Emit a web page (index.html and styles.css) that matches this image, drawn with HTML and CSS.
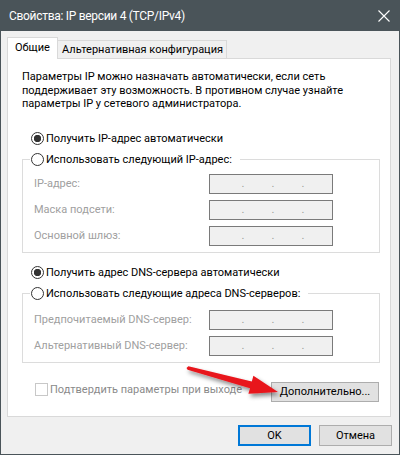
FILE: index.html
```html
<!DOCTYPE html>
<html lang="ru">
<head>
    <meta charset="UTF-8">
    <title>Свойства: IP версии 4 (TCP/IPv4)</title>
    <link rel="stylesheet" href="styles.css">
</head>
<body>

    <div class="window">

        <!-- Title bar -->
        <div class="titlebar">
            <span class="title">Свойства: IP версии 4 (TCP/IPv4)</span>
            <svg class="close" width="12" height="12" viewBox="0 0 12 12">
                <path d="M0.5 0.5 L11.5 11.5 M11.5 0.5 L0.5 11.5" stroke="#fff" stroke-width="1.1" fill="none"/>
            </svg>
        </div>

        <div class="dialog">

            <!-- Tabs -->
            <div class="tabs">
                <div class="tab active">Общие</div>
                <div class="tab other">Альтернативная конфигурация</div>
            </div>

            <div class="panel">
                <p class="intro">Параметры IP можно назначать автоматически, если сеть<br>поддерживает эту возможность. В противном случае узнайте<br>параметры IP у сетевого администратора.</p>

                <div class="opt first"><span class="radio on"></span>Получить IP-адрес автоматически</div>

                <fieldset class="group">
                    <legend class="opt"><span class="radio"></span>Использовать следующий IP-адрес:</legend>
                    <div class="field top-ip"><span class="field-label">IP-адрес:</span><span class="ip"><span>.</span><span>.</span><span>.</span></span></div>
                    <div class="field"><span class="field-label">Маска подсети:</span><span class="ip"><span>.</span><span>.</span><span>.</span></span></div>
                    <div class="field"><span class="field-label">Основной шлюз:</span><span class="ip"><span>.</span><span>.</span><span>.</span></span></div>
                </fieldset>

                <div class="opt dns"><span class="radio on"></span>Получить адрес DNS-сервера автоматически</div>

                <fieldset class="group">
                    <legend class="opt"><span class="radio"></span>Использовать следующие адреса DNS-серверов:</legend>
                    <div class="field top-dns"><span class="field-label">Предпочитаемый DNS-сервер:</span><span class="ip"><span>.</span><span>.</span><span>.</span></span></div>
                    <div class="field"><span class="field-label">Альтернативный DNS-сервер:</span><span class="ip"><span>.</span><span>.</span><span>.</span></span></div>
                </fieldset>

                <div class="bottom-row">
                    <div class="check"><span class="box"></span>Подтвердить параметры при выходе</div>
                    <button class="btn advanced">Дополнительно...</button>
                </div>
            </div>

            <div class="footer">
                <button class="btn ok">OK</button>
                <button class="btn">Отмена</button>
            </div>
        </div>

        <!-- red annotation arrow -->
        <svg class="arrow" width="400" height="455" viewBox="0 0 400 455">
            <defs>
                <filter id="shadow" x="-20%" y="-50%" width="140%" height="200%">
                    <feDropShadow dx="2" dy="3" stdDeviation="2" flood-color="#000" flood-opacity="0.45"/>
                </filter>
            </defs>
            <polygon filter="url(#shadow)" fill="#e8151b"
                points="188.4,366.3 251.8,381.4 253.4,375.8 278,392 248.4,393.8 250,388.2 187.6,369.7 186.5,368"/>
        </svg>
    </div>

</body>
</html>
```

FILE: styles.css
```css
* {
    box-sizing: border-box;
}
body {
    margin: 0;
    font-family: Roboto, "Noto Sans", sans-serif;
    font-size: 11px;
    color: #000;
    background: #fff;
}
.window {
    position: relative;
    width: 400px;
    height: 455px;
    border: 1px solid #4a5459;
    background: #f0f0f0;
    display: flex;
    flex-direction: column;
    overflow: hidden;
}
.titlebar {
    height: 30px;
    flex-shrink: 0;
    background: #4a5459;
    color: #fff;
    display: flex;
    align-items: center;
    padding: 0 9px 0 8px;
    font-size: 12px;
    letter-spacing: -0.3px;
}
.close {
    margin-left: auto;
}
.dialog {
    padding: 6px 8px 0 6px;
}

/* tabs */
.tabs {
    display: flex;
    align-items: flex-end;
    height: 21px;
}
.tab {
    height: 18px;
    border: 1px solid #d9d9d9;
    border-bottom: none;
    line-height: 17px;
    white-space: nowrap;
}
.tab.active {
    width: 51px;
    height: 22px;
    padding-left: 7px;
    line-height: 20px;
    margin-bottom: -1px;
    background: #fff;
    position: relative;
    z-index: 1;
}
.tab.other {
    width: 170px;
    margin-left: -1px;
    padding-left: 4px;
}

/* panel */
.panel {
    height: 359px;
    background: #fff;
    border: 1px solid #d9d9d9;
    padding: 11px 10px 0 14px;
}
.intro {
    margin: 0 0 21px;
    line-height: 13.5px;
    white-space: nowrap;
}
.opt {
    display: flex;
    align-items: center;
    height: 14px;
    gap: 2px;
    white-space: nowrap;
}
.opt.first,
.opt.dns {
    padding-left: 9px;
}
.opt.dns {
    margin-top: 13px;
}
.radio {
    width: 13px;
    height: 13px;
    border: 1px solid #333;
    border-radius: 50%;
    background: #fff;
    flex-shrink: 0;
}
.radio.on {
    background: radial-gradient(circle, #333 0 3.4px, #fff 4px);
}
.group {
    margin: 7px 0 0;
    padding: 0 0 6px;
    border: 1px solid #dcdcdc;
}
.group legend {
    margin-left: 7px;
    padding: 0 8px 0 1px;
}
.field {
    display: flex;
    align-items: center;
    height: 20px;
    margin-top: 6px;
    padding-left: 11px;
    white-space: nowrap;
}
.field.top-ip {
    margin-top: 7px;
}
.field.top-dns {
    margin-top: 9px;
}
.field-label {
    width: 175px;
    flex-shrink: 0;
    color: #a0a0a0;
}
.ip {
    width: 124px;
    height: 20px;
    flex-shrink: 0;
    border: 1px solid #7a7a7a;
    background: #f0f0f0;
    display: flex;
    padding-left: 18px;
    color: #9a9a9a;
    line-height: 17px;
}
.ip span {
    width: 30px;
    text-align: center;
}

/* bottom row */
.bottom-row {
    display: flex;
    justify-content: space-between;
    align-items: flex-start;
    margin-top: 19px;
    padding-right: 1px;
}
.check {
    display: flex;
    align-items: center;
    gap: 2px;
    margin: 1px 0 0 13px;
    color: #8a8a8a;
    line-height: 13px;
    white-space: nowrap;
}
.box {
    width: 13px;
    height: 13px;
    border: 1px solid #c8c8c8;
    background: #fff;
}
.btn {
    font-family: Roboto, "Noto Sans", sans-serif;
    font-size: 11px;
    color: #000;
    background: #e1e1e1;
    border: 1px solid #adadad;
    height: 21px;
    width: 73px;
    padding: 0;
    line-height: 18px;
}
.btn.advanced {
    width: 108px;
    height: 20px;
}
.btn.ok {
    border: 2px solid #0078d7;
}
.footer {
    display: flex;
    justify-content: flex-end;
    gap: 8px;
    margin: 8px -1px 0 0;
}
.arrow {
    position: absolute;
    left: -1px;
    top: -1px;
    pointer-events: none;
}
```
